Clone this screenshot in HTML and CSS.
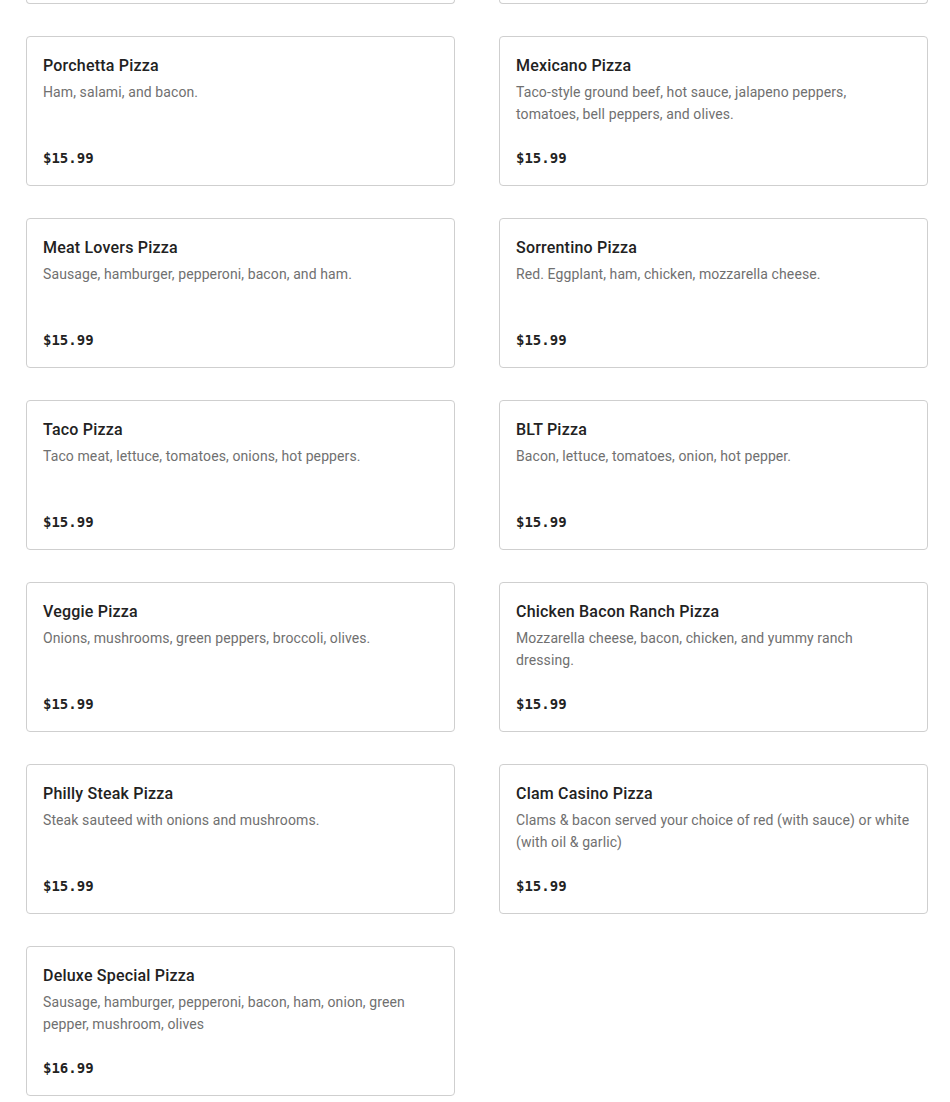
FILE: index.html
```html
<!DOCTYPE html>
<html>
<head>
    <title>Pizza Menu</title>
    <link rel="stylesheet" href="styles.css">
</head>
<body>
    <div class="menu">
        <!-- tail of the row above, scrolled off -->
        <div class="item cut"></div>
        <div class="item cut"></div>

        <div class="item">
            <h3>Porchetta Pizza</h3>
            <p class="desc">Ham, salami, and bacon.</p>
            <p class="price">$15.99</p>
        </div>
        <div class="item">
            <h3>Mexicano Pizza</h3>
            <p class="desc">Taco-style ground beef, hot sauce, jalapeno peppers, tomatoes, bell peppers, and olives.</p>
            <p class="price">$15.99</p>
        </div>

        <div class="item">
            <h3>Meat Lovers Pizza</h3>
            <p class="desc">Sausage, hamburger, pepperoni, bacon, and ham.</p>
            <p class="price">$15.99</p>
        </div>
        <div class="item">
            <h3>Sorrentino Pizza</h3>
            <p class="desc">Red. Eggplant, ham, chicken, mozzarella cheese.</p>
            <p class="price">$15.99</p>
        </div>

        <div class="item">
            <h3>Taco Pizza</h3>
            <p class="desc">Taco meat, lettuce, tomatoes, onions, hot peppers.</p>
            <p class="price">$15.99</p>
        </div>
        <div class="item">
            <h3>BLT Pizza</h3>
            <p class="desc">Bacon, lettuce, tomatoes, onion, hot pepper.</p>
            <p class="price">$15.99</p>
        </div>

        <div class="item">
            <h3>Veggie Pizza</h3>
            <p class="desc">Onions, mushrooms, green peppers, broccoli, olives.</p>
            <p class="price">$15.99</p>
        </div>
        <div class="item">
            <h3>Chicken Bacon Ranch Pizza</h3>
            <p class="desc">Mozzarella cheese, bacon, chicken, and yummy ranch dressing.</p>
            <p class="price">$15.99</p>
        </div>

        <div class="item">
            <h3>Philly Steak Pizza</h3>
            <p class="desc">Steak sauteed with onions and mushrooms.</p>
            <p class="price">$15.99</p>
        </div>
        <div class="item">
            <h3>Clam Casino Pizza</h3>
            <p class="desc">Clams &amp; bacon served your choice of red (with sauce) or white (with oil &amp; garlic)</p>
            <p class="price">$15.99</p>
        </div>

        <div class="item">
            <h3>Deluxe Special Pizza</h3>
            <p class="desc">Sausage, hamburger, pepperoni, bacon, ham, onion, green pepper, mushroom, olives</p>
            <p class="price">$16.99</p>
        </div>
    </div>
</body>
</html>
```

FILE: styles.css
```css
body { margin: 0; background: #fff; font-family: Roboto, "Liberation Sans", sans-serif; color: #222; }
.menu { display: grid; grid-template-columns: 429px 429px; column-gap: 44px; row-gap: 32px; padding: 0 22px 0 26px; }
.item { height: 150px; box-sizing: border-box; border: 1px solid #cfcfcf; border-radius: 4px; padding: 16px 16px 17px; display: flex; flex-direction: column; }
.item.cut { height: 4px; padding: 0; border-top: none; border-radius: 0 0 4px 4px; }
.item h3 { margin: 0; font-size: 16px; line-height: 26px; font-weight: 500; letter-spacing: 0.2px; color: #222; }
.desc { margin: 2px 0 0; font-size: 14px; line-height: 22px; letter-spacing: 0.1px; color: #707070; }
.price { margin: auto 0 0; font-family: "DejaVu Sans Mono", monospace; font-size: 14px; line-height: 20px; font-weight: bold; color: #222; }
```
